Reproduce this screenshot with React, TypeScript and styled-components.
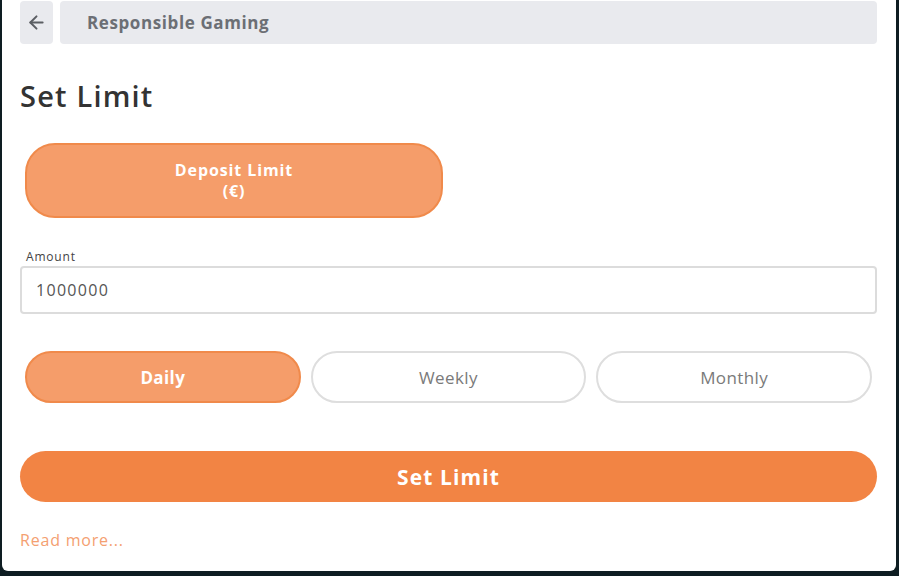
import { useState } from "react"
import styled, { createGlobalStyle } from "styled-components"
import { ArrowLeft } from "lucide-react"

const GlobalStyle = createGlobalStyle`
  html, body {
    margin: 0;
    padding: 0;
    background: #0e1d22;
  }
  body {
    font-family: "Open Sans", "Noto Sans", sans-serif;
  }
  * {
    box-sizing: border-box;
  }
`

const periods = ["Daily", "Weekly", "Monthly"]

export default function App() {
  const [period, setPeriod] = useState("Daily")

  return (
    <>
      <GlobalStyle />
      <Modal>
        <Header>
          <BackButton aria-label="Back">
            <ArrowLeft size={21} strokeWidth={2.3} />
          </BackButton>
          <TitleBar>Responsible Gaming</TitleBar>
        </Header>

        <Heading>Set Limit</Heading>

        <TypeRow>
          <TypePill>
            Deposit Limit
            <br />
            (€)
          </TypePill>
        </TypeRow>

        <Field>
          <Label>Amount</Label>
          <Input defaultValue="1000000" />
        </Field>

        <PeriodRow>
          {periods.map((p) => (
            <PeriodPill key={p} $active={p === period} onClick={() => setPeriod(p)}>
              {p}
            </PeriodPill>
          ))}
        </PeriodRow>

        <Submit>Set Limit</Submit>

        <ReadMore href="#">Read more...</ReadMore>
      </Modal>
    </>
  )
}

const Modal = styled.div`
  margin-left: 2px;
  width: 894px;
  height: 571px;
  background: #fff;
  border-radius: 0 0 6px 6px;
  padding: 1px 19px 0 18px;
  display: flex;
  flex-direction: column;
`
const Header = styled.div`
  display: flex;
  gap: 7px;
  height: 43px;
`
const BackButton = styled.button`
  width: 33px;
  border: none;
  border-radius: 4px;
  background: #e9eaee;
  color: #5b5e63;
  display: flex;
  align-items: center;
  justify-content: center;
  padding: 0;
`
const TitleBar = styled.div`
  flex: 1;
  background: #e9eaee;
  border-radius: 4px;
  display: flex;
  align-items: center;
  padding-left: 27px;
  font-size: 17px;
  font-weight: 700;
  letter-spacing: 0.6px;
  color: #6c6f75;
`
const Heading = styled.h1`
  margin: 33px 0 0;
  font-size: 29px;
  line-height: 38px;
  font-weight: 600;
  letter-spacing: 1.2px;
  color: #333;
`
const TypeRow = styled.div`
  display: flex;
  padding: 28px 5px 0;
`
const TypePill = styled.div`
  width: 418px;
  height: 75px;
  border-radius: 30px;
  background: #f59d6a;
  border: 2px solid #f08a4b;
  color: #fff;
  font-weight: 700;
  font-size: 16px;
  line-height: 21px;
  letter-spacing: 0.9px;
  display: flex;
  align-items: center;
  justify-content: center;
  text-align: center;
`
const Field = styled.div`
  display: flex;
  flex-direction: column;
  margin-top: 31px;
`
const Label = styled.label`
  font-size: 12px;
  line-height: 16px;
  letter-spacing: 0.8px;
  color: #444;
  padding-left: 6px;
  margin-bottom: 1px;
`
const Input = styled.input`
  height: 48px;
  border: 2px solid #dcdcdc;
  border-radius: 4px;
  padding: 0 14px;
  font-family: inherit;
  font-size: 16px;
  letter-spacing: 1.3px;
  color: #555;
  outline: none;
`
const PeriodRow = styled.div`
  display: grid;
  grid-template-columns: repeat(3, 1fr);
  gap: 10px;
  padding: 37px 5px 0;
`
const PeriodPill = styled.button<{ $active: boolean }>`
  height: 52px;
  border-radius: 26px;
  font-family: inherit;
  font-size: 17px;
  letter-spacing: 0.4px;
  cursor: pointer;
  border: 2px solid ${(p) => (p.$active ? "#f08a4b" : "#dedede")};
  background: ${(p) => (p.$active ? "#f59d6a" : "#fff")};
  color: ${(p) => (p.$active ? "#fff" : "#7a7a7a")};
  font-weight: ${(p) => (p.$active ? 700 : 400)};
`
const Submit = styled.button`
  margin-top: 48px;
  height: 51px;
  border: none;
  border-radius: 26px;
  background: #f28444;
  color: #fff;
  font-family: inherit;
  font-size: 21px;
  font-weight: 700;
  letter-spacing: 1.1px;
  cursor: pointer;
`
const ReadMore = styled.a`
  margin-top: 27px;
  font-size: 16px;
  letter-spacing: 0.8px;
  color: #f4a071;
  text-decoration: none;
  align-self: flex-start;
`
